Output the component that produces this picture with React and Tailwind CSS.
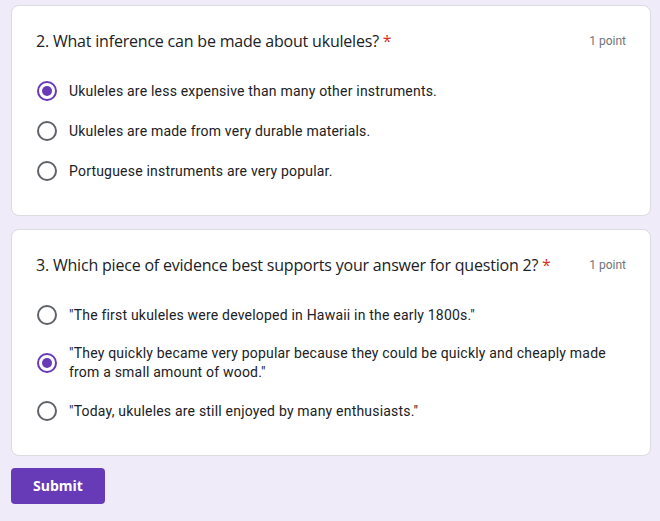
const questions = [
  {
    title: '2. What inference can be made about ukuleles?',
    options: [
      'Ukuleles are less expensive than many other instruments.',
      'Ukuleles are made from very durable materials.',
      'Portuguese instruments are very popular.',
    ],
    selected: 0,
  },
  {
    title: '3. Which piece of evidence best supports your answer for question 2?',
    options: [
      '"The first ukuleles were developed in Hawaii in the early 1800s."',
      '"They quickly became very popular because they could be quickly and cheaply made from a small amount of wood."',
      '"Today, ukuleles are still enjoyed by many enthusiasts."',
    ],
    selected: 1,
  },
]

function Radio({ checked }) {
  return (
    <span
      className={`flex size-5 shrink-0 items-center justify-center rounded-full border-2 ${
        checked ? 'border-[#673ab7]' : 'border-[#5f6368]'
      }`}
    >
      {checked && <span className="size-2.5 rounded-full bg-[#673ab7]" />}
    </span>
  )
}

function QuestionCard({ q }) {
  return (
    <div className="rounded-lg border border-[#dadce0] bg-white px-6 pt-[23px] pb-6">
      <div className="flex items-center justify-between">
        <h2 className="text-base leading-6 text-[#202124] font-['Open_Sans',sans-serif] tracking-[-0.2px]">
          {q.title} <span className="text-[#d93025]">*</span>
        </h2>
        <span className="text-xs text-[#70757a] font-['Roboto',sans-serif]">1 point</span>
      </div>
      <div className="mt-[18px] flex flex-col">
        {q.options.map((opt, i) => (
          <label key={i} className="flex min-h-[40px] items-center gap-3 pl-px">
            <Radio checked={i === q.selected} />
            <span className="max-w-[545px] py-[9px] text-sm leading-[19px] tracking-[0.2px] text-[#202124] font-['Roboto',sans-serif]">
              {opt}
            </span>
          </label>
        ))}
      </div>
    </div>
  )
}

export default function App() {
  return (
    <div className="min-h-[521px] bg-[#f0ebf8] pl-[11px] pr-[9px] pt-[5px]">
      <div className="flex flex-col gap-[13px]">
        {questions.map((q) => (
          <QuestionCard key={q.title} q={q} />
        ))}
      </div>
      <button className="mt-[12px] h-9 rounded bg-[#673ab7] px-[22px] text-sm font-bold text-white font-['Open_Sans',sans-serif]">
        Submit
      </button>
    </div>
  )
}
